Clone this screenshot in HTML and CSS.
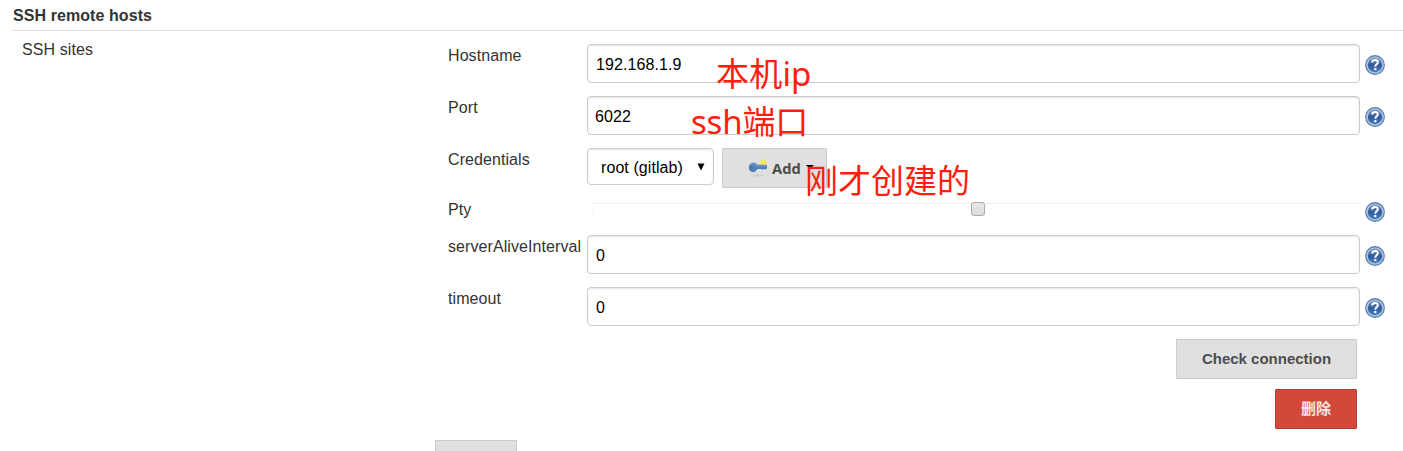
FILE: index.html
```html
<!DOCTYPE html>
<html lang="zh-CN">
<head>
<meta charset="utf-8">
<title>SSH remote hosts</title>
<link rel="stylesheet" href="styles.css">
</head>
<body>
<svg class="defs" width="0" height="0" aria-hidden="true">
  <defs>
    <linearGradient id="blue" x1="0" y1="0" x2="0" y2="1"><stop offset="0" stop-color="#7d9ccc"/><stop offset=".5" stop-color="#2f5a9c"/><stop offset="1" stop-color="#4a80be"/></linearGradient>
    <symbol id="help" viewBox="0 0 20 20">
      <circle cx="10" cy="10" r="9.9" fill="#5478ab"/>
      <circle cx="10" cy="10" r="8" fill="url(#blue)" stroke="#a9c0de" stroke-width="1.7"/>
      <path d="M7.200 7.500C7.300 5.700 8.400 5 10.100 5c1.700 0 2.700.8 2.700 2.200 0 2.100-2.500 2.200-2.500 4.500" fill="none" stroke="#fff" stroke-width="2"/>
      <rect x="9.200" y="13" width="2.200" height="2.200" fill="#fff"/>
    </symbol>
  </defs>
</svg>
<main class="page">
  <h1 class="title">SSH remote hosts</h1>
  <section class="section">
    <div class="section-name">SSH sites</div>
    <div class="form">
      <div class="row">
        <label class="label">Hostname</label>
        <div class="field"><div class="input">192.168.1.9</div><span class="note note-ip">本机ip</span></div>
        <svg class="help"><use href="#help"/></svg>
      </div>
      <div class="row">
        <label class="label">Port</label>
        <div class="field"><div class="input port">6022</div><span class="note note-port">ssh端口</span></div>
        <svg class="help"><use href="#help"/></svg>
      </div>
      <div class="row">
        <label class="label">Credentials</label>
        <div class="field credentials">
          <div class="select"><span>root (gitlab)</span><svg class="arrow" viewBox="0 0 8 8"><path d="M0.500 0.500H7.500L4 7.500Z"/></svg></div>
          <div class="button add">
            <svg class="key" viewBox="0 0 20 20">
              <ellipse cx="10" cy="17.500" rx="6.500" ry="1.200" fill="#d0d0d0"/>
              <circle cx="15.500" cy="4.500" r="3.200" fill="#f0ea62"/>
              <path d="M5 4.800c2 0 3.200.6 4 1.900h9.200l.8 1.300v2.600l-1.800.9-1.400-.6-1.600.8-1.600-.6H9.300c-.8 2-2.200 3.200-4.300 3.200C2.300 14.300.8 12.200.8 9.600S2.300 4.800 5 4.800Z" fill="#4f80b8"/>
              <path d="M3 6.500c2-.8 4-.2 5.200 1.600h9.500" fill="none" stroke="#7ba1cf"/>
              <circle cx="3.600" cy="9.500" r=".9" fill="#416fa8"/>
            </svg>
            <span>Add</span>
            <svg class="caret" viewBox="0 0 8 4"><path d="M0 0H8L4 4Z"/></svg>
          </div>
          <span class="note note-created">刚才创建的</span>
        </div>
      </div>
      <div class="row row-check">
        <label class="label">Pty</label>
        <div class="field"><div class="check-line"><span class="checkbox"></span></div></div>
        <svg class="help"><use href="#help"/></svg>
      </div>
      <div class="row">
        <label class="label">serverAliveInterval</label>
        <div class="field"><div class="input">0</div></div>
        <svg class="help"><use href="#help"/></svg>
      </div>
      <div class="row">
        <label class="label">timeout</label>
        <div class="field"><div class="input">0</div></div>
        <svg class="help"><use href="#help"/></svg>
      </div>
      <div class="actions">
        <div class="button check">Check connection</div>
        <div class="button delete">删除</div>
      </div>
      <div class="button more"></div>
    </div>
  </section>
</main>
</body>
</html>
```
FILE: styles.css
```css
* { box-sizing: border-box; }
html, body { height: 100%; }
body {
  margin: 0;
  overflow: hidden;
  background: #fff;
  color: #333;
  font: 16px/20px "Liberation Sans", "Noto Sans CJK SC", sans-serif;
  letter-spacing: .08px;
}
.defs { display: block; }
.page { height: 451px; padding-left: 12px; overflow: hidden; }
.title {
  height: 31px;
  margin: 0;
  padding: 6px 0 0 1px;
  border-bottom: 1px solid #e0e0e0;
  font-size: 16px;
  line-height: 20px;
}
.section { display: grid; grid-template-columns: 423px 1fr; }
.section-name { padding: 9px 0 0 10px; }
.form { padding-top: 13px; }
.row {
  display: grid;
  grid-template-columns: 139px 773px 25px;
  height: 52px;
  padding-left: 13px;
}
.label { padding-top: 2px; white-space: nowrap; }
.field { position: relative; }
.input {
  height: 39px;
  padding: 1px 8px 0;
  border: 1px solid #ccc;
  border-radius: 4px;
  box-shadow: inset 0 1px 2px rgba(0, 0, 0, .1);
  color: #000;
  line-height: 38px;
}
.port { padding-left: 7px; }
.help { width: 20px; height: 20px; margin: 11px 0 0 5px; }
.credentials { display: flex; align-items: flex-start; gap: 8px; }
.select {
  display: flex;
  align-items: center;
  justify-content: space-between;
  width: 127px;
  height: 37px;
  padding: 2px 8px 0 13px;
  border: 1px solid #ccc;
  border-radius: 4px;
  box-shadow: inset 0 1px 2px rgba(0, 0, 0, .1);
  color: #000;
}
.arrow { width: 8px; height: 8px; margin-top: -2px; }
.button {
  display: flex;
  align-items: center;
  justify-content: center;
  height: 40px;
  border: 1px solid #ccc;
  border-radius: 1px;
  background: #e0e0e0;
  color: #4d4d4d;
  font-size: 15px;
  font-weight: bold;
  letter-spacing: 0;
}
.add { justify-content: flex-start; width: 105px; padding-left: 25px; font-family: "Open Sans", sans-serif; font-size: 14.7px; }
.key { width: 20px; height: 20px; margin-right: 4px; }
.caret { width: 8px; height: 4px; margin: -2px 0 0 5px; fill: #000; }
.note {
  position: absolute;
  color: #ff1d0d;
  font-family: "Noto Sans", "Noto Sans CJK SC", sans-serif;
  font-size: 33px;
  line-height: 40px;
  letter-spacing: 0;
  white-space: nowrap;
}
.note-ip { left: 129px; top: 10px; letter-spacing: .2px; }
.note-port { left: 104px; top: 6px; letter-spacing: -.2px; }
.note-created { left: 218px; top: 13px; }
.row-check { height: 35px; }
.row-check .label { padding-top: 0; }
.row-check .help { margin-top: 2px; }
.check-line {
  height: 16px;
  margin: 3px -2px 0 5px;
  border-top: 1px solid #eee;
  border-left: 1px solid #f8f8f8;
  text-align: center;
  line-height: 0;
}
.checkbox {
  display: inline-block;
  width: 14px;
  height: 14px;
  margin-top: -2px;
  vertical-align: top;
  border: 1px solid #aaa;
  border-radius: 3px;
  background: linear-gradient(#e8e8e8, #dcdcdc);
}
.actions { display: flex; flex-direction: column; align-items: flex-end; gap: 10px; width: 922px; }
.check { width: 181px; }
.delete { width: 82px; border-color: #b83c2e; background: #d24939; color: #f3e8e6; }
.more { width: 82px; margin-top: 11px; }
```
